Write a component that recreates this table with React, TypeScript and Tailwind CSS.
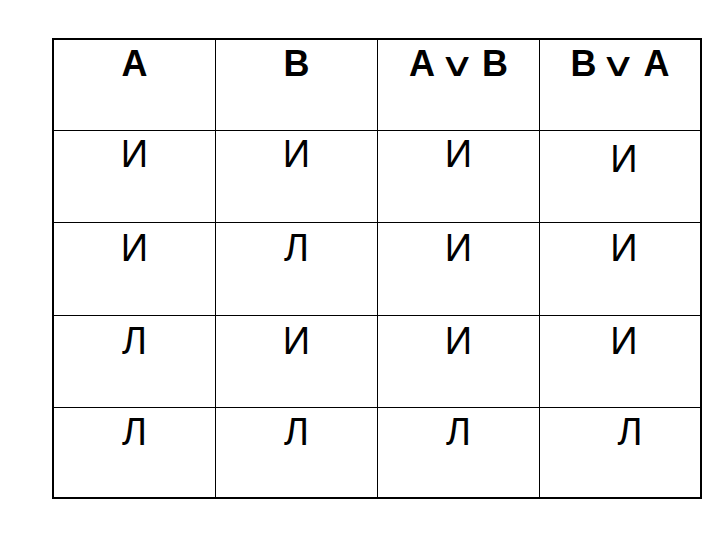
const header = [
  { parts: ["A"] },
  { parts: ["B"] },
  { parts: ["A", "∨", "B"] },
  { parts: ["B", "∨", "A"] },
];

const rows = [
  ["И", "И", "И", "И"],
  ["И", "Л", "И", "И"],
  ["Л", "И", "И", "И"],
  ["Л", "Л", "Л", "Л"],
];

// row heights include the 1px top rule of rows 2-5
const rowClass = [
  "h-[92px] pt-[4px]",
  "h-[93px] pt-[6px]",
  "h-[92px] pt-[6px]",
  "h-[90px] pt-[5px]",
];

function HeaderCell({ parts, first }: { parts: string[]; first: boolean }) {
  return (
    <div
      className={`h-[90px] pt-[6px] ${first ? "" : "border-l border-black"}`}
    >
      <div className="flex items-baseline justify-center leading-none">
        {parts.map((p, i) =>
          p === "∨" ? (
            <span
              key={i}
              className="ml-[10px] mr-[13px] inline-block scale-x-[1.5] font-['DejaVu_Sans',sans-serif] text-[33px] font-normal leading-none"
            >
              {p}
            </span>
          ) : (
            <span key={i} className="text-[36px] font-bold leading-none">
              {p}
            </span>
          )
        )}
      </div>
    </div>
  );
}

export default function App() {
  return (
    <div className="h-[540px] w-[720px] bg-white pl-[52px] pt-[38px] font-['Liberation_Sans',Arial,sans-serif] text-black">
      <div className="grid w-[650px] grid-cols-[161px_162px_162px_161px] border-2 border-black">
        {header.map((h, i) => (
          <HeaderCell key={i} parts={h.parts} first={i === 0} />
        ))}
        {rows.map((row, r) =>
          row.map((v, c) => {
            let shift = "";
            if (c === 3) shift = r === 3 ? "pl-[20px]" : "pl-[8px]";
            const extra = c === 3 && r === 0 ? "mt-[5px]" : "";
            return (
              <div
                key={`${r}-${c}`}
                className={`flex items-start justify-center border-t border-black ${rowClass[r]} ${shift} ${
                  c === 0 ? "" : "border-l"
                }`}
              >
                <span className={`text-[38px] leading-none ${extra}`}>{v}</span>
              </div>
            );
          })
        )}
      </div>
    </div>
  );
}
